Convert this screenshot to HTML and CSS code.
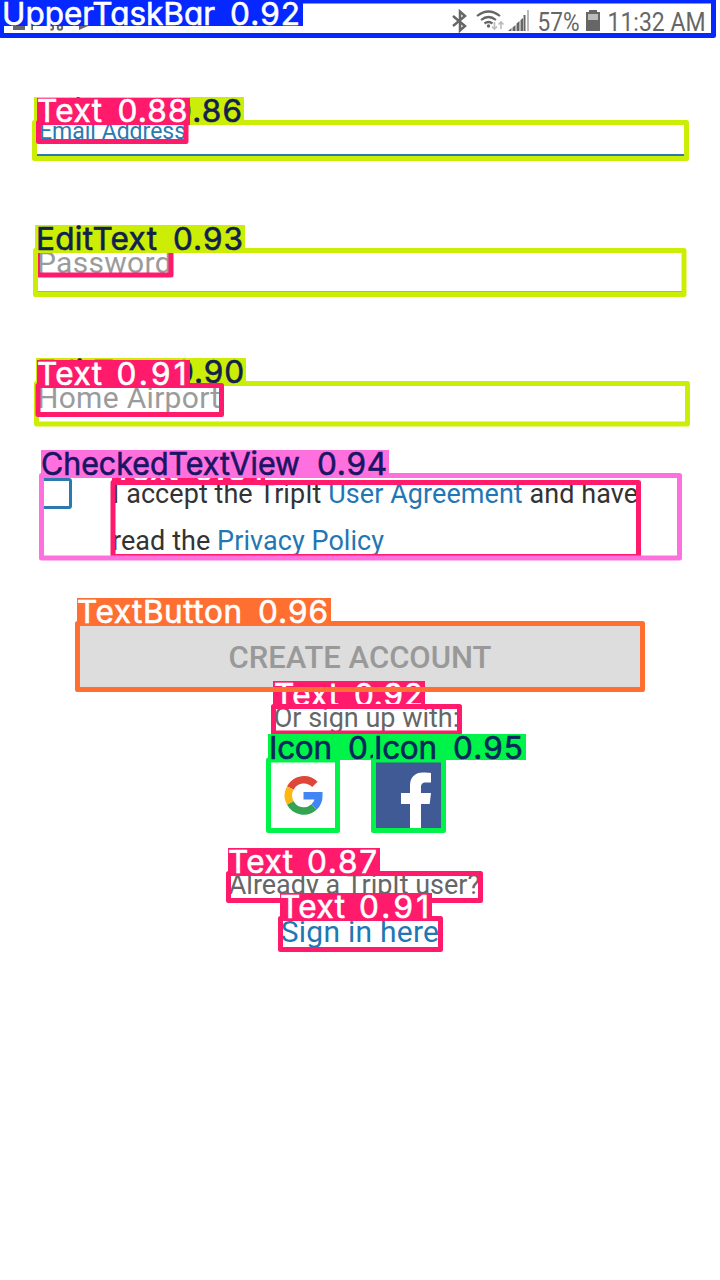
FILE: index.html
```html
<!DOCTYPE html>
<html lang="en">
<head>
<meta charset="utf-8">
<title>Create account</title>
<link rel="stylesheet" href="styles.css">
</head>
<body>
<div class="screen">
  <header class="status">
    <svg class="status-left" width="100" height="38" viewBox="0 0 100 38" fill="#666">
      <path d="M13 25h12v5H13zM29 25h4v5h-4zM79 26h9l-9 4z"/>
      <g fill="none" stroke="#666" stroke-width="2"><circle cx="51" cy="27.500" r="2.200"/><circle cx="60" cy="27.500" r="2.200"/></g>
    </svg>
    <svg class="status-right" width="270" height="38" viewBox="450 0 270 38">
      <path d="M453 16l12 10-5 4.500V11.500l5 4.500-12 10" fill="none" stroke="#666" stroke-width="2.500"/>
      <g fill="none" stroke="#666" stroke-width="2.200"><path d="M477 16q11.500-9 23 0M481 20q7.500-6 15 0M484.500 23.500q4-3 8 0"/></g>
      <circle cx="488.500" cy="26" r="1.700" fill="#666"/>
      <path d="M494.500 22v7m-2.500-2.500l2.500 2.500 2.500-2.500M501 29v-7m-2.500 2.500L501 22l2.500 2.500" fill="none" stroke="#bbb" stroke-width="1.600"/>
      <path d="M508 31l3.500-3v3zM512.500 27.500l3-2.500v6h-3zM516.500 23.500l3-2.500v10h-3zM520.500 20l2.500-2v13h-2.500z" fill="#666"/>
      <path d="M524.500 15v16" stroke="#666" stroke-width="2"/>
      <path d="M528 10v21" stroke="#bbb" stroke-width="2"/>
      <text class="status-text" x="537.500" y="31" textLength="42" lengthAdjust="spacingAndGlyphs">57%</text>
      <path d="M589 10h8v2h3v19h-14V12h3z" fill="#666"/><path d="M588 14h10v6h-10z" fill="#bbb"/>
      <text class="status-text" x="607.500" y="31" textLength="98" lengthAdjust="spacingAndGlyphs">11:32 AM</text>
    </svg>
  </header>
  <main class="form">
    <div class="field email"><span>Email Address</span></div>
    <div class="field password"><span>Password</span></div>
    <div class="field airport"><span>Home Airport</span></div>
    <div class="terms">
      <span class="check"></span>
      <p><span class="line first">I accept the TripIt <a>User Agreement</a> and have</span><br><span class="line">read the <a>Privacy Policy</a></span></p>
    </div>
    <button class="create"><span>CREATE ACCOUNT</span></button>
    <div class="or">Or sign up with:</div>
    <div class="social">
      <svg width="66" height="66" viewBox="0 0 66 66" fill="none" stroke-width="7.500">
        <path d="M43.900 22.400A15.300 15.300 0 0 0 19.300 26" stroke="#df4538"/>
        <path d="M19.300 26a15.300 15.300 0 0 0 0 15" stroke="#fbb811"/>
        <path d="M19.300 41a15.300 15.300 0 0 0 23.700 4" stroke="#35a352"/>
        <path d="M43 45a15.300 15.300 0 0 0 4.800-11.300H32.500" stroke="#4285f4"/>
      </svg>
      <svg width="66" height="66" viewBox="0 0 66 66">
        <path fill="#405a95" d="M0 0h66v66H0z"/>
        <path fill="#fff" d="M34 66V42h-9V31h9v-7c0-9 5-13.500 13-13.500 3.500 0 6 .2 8 .6v9.500h-5c-4 0-5 2-5 5V31h10l-1.300 11H45v24z"/>
      </svg>
    </div>
    <div class="already">Already a TripIt user?</div>
    <a class="signin">Sign in here</a>
  </main>

  <svg class="marks" width="720" height="1280" viewBox="0 0 720 1280">
    <g class="pink">
      <rect class="tag" x="112" y="457" width="153" height="26"/>
      <text x="113" y="481" textLength="65">Text</text><text x="194" y="481" textLength="69">0.91</text>
      <rect class="box" x="113" y="482.500" width="525.500" height="74"/>
      <rect class="box" x="37.500" y="250" width="133.500" height="25"/>
      <rect class="tag" x="273" y="681" width="152" height="26"/>
      <text x="274" y="706" textLength="65">Text</text><text x="354" y="706" textLength="69">0.92</text>
      <rect class="box" x="273.500" y="706.500" width="186" height="26.500"/>
    </g>
    <g class="blue">
      <rect class="box" x="1.500" y="1" width="712" height="34.500"/>
      <rect class="tag" x="0" y="0" width="303" height="26"/>
      <text x="2" y="25" textLength="213" lengthAdjust="spacingAndGlyphs">UpperTaskBar</text><text x="230" y="25" textLength="70">0.92</text>
    </g>
    <g class="lime">
      <rect class="box" x="34.500" y="122.500" width="652" height="36"/>
      <rect class="tag" x="34" y="97" width="210" height="26"/>
      <text x="35.500" y="121.500" textLength="121">EditText</text><text x="172" y="121.500" textLength="70">0.86</text>
      <rect class="box" x="35.500" y="250.500" width="648.500" height="44"/>
      <rect class="tag" x="35" y="225" width="210" height="26"/>
      <text x="36" y="250" textLength="121">EditText</text><text x="173" y="250" textLength="70">0.93</text>
      <rect class="box" x="36.500" y="383.500" width="651" height="40.500"/>
      <rect class="tag" x="36" y="358" width="210" height="26"/>
      <text x="37" y="382.500" textLength="121">EditText</text><text x="174" y="382.500" textLength="70">0.90</text>
    </g>
    <g class="pink">
      <rect class="box" x="38.500" y="122.500" width="147.500" height="19"/>
      <rect class="tag" x="37" y="98" width="153" height="27"/>
      <text x="37" y="122" textLength="65">Text</text><text x="117.500" y="122" textLength="70">0.88</text>
      <rect class="box" x="38" y="385.500" width="183.500" height="29"/>
      <rect class="tag" x="37" y="360" width="153" height="26"/>
      <text x="37" y="385" textLength="65">Text</text><text x="116.500" y="385" textLength="70">0.91</text>
    </g>
    <g class="violet">
      <rect class="box" x="41.500" y="475.500" width="638" height="82.500"/>
      <rect class="tag" x="41" y="450" width="348" height="26"/>
      <text x="41" y="475" textLength="259" lengthAdjust="spacingAndGlyphs">CheckedTextView</text><text x="317" y="475" textLength="70">0.94</text>
    </g>
    <g class="orange">
      <rect class="box" x="77.500" y="623.500" width="565" height="66"/>
      <rect class="tag" x="77" y="598" width="254" height="26"/>
      <text x="77" y="623" textLength="165">TextButton</text><text x="258" y="623" textLength="70">0.96</text>
    </g>
    <g class="green">
      <rect class="box" x="268.500" y="760" width="69" height="70.500"/>
      <rect class="tag" x="268" y="734" width="153" height="26"/>
      <text x="269" y="758.500" textLength="63">Icon</text><text x="348" y="758.500" textLength="70">0.95</text>
      <rect class="box" x="373.500" y="760" width="70" height="70.500"/>
      <rect class="tag" x="373" y="734" width="153" height="26"/>
      <text x="374" y="758.500" textLength="63">Icon</text><text x="453" y="758.500" textLength="70">0.95</text>
    </g>
    <g class="pink">
      <rect class="box" x="228.500" y="873.500" width="252" height="27"/>
      <rect class="tag" x="228" y="848" width="152" height="26"/>
      <text x="228" y="873" textLength="65">Text</text><text x="307" y="873" textLength="70">0.87</text>
      <rect class="box" x="280.500" y="918.500" width="160" height="31"/>
      <rect class="tag" x="280" y="893" width="152" height="26"/>
      <text x="280" y="918" textLength="65">Text</text><text x="359" y="918" textLength="70">0.91</text>
    </g>
  </svg>
</div>
</body>
</html>
```
FILE: styles.css
```css
body { margin: 0; background: #fff; font-family: Roboto, "Liberation Sans", sans-serif; }
.screen { position: relative; width: 720px; height: 1280px; overflow: hidden; }
.status { display: flex; justify-content: space-between; height: 38px; }
.status-text { font-size: 26px; fill: #666; }
.form { display: flex; flex-direction: column; align-items: center; }
.field { box-sizing: border-box; width: 648px; padding-left: 1px; color: #9b9b9b; font-size: 30px; line-height: 36px; border-bottom: 1px solid #aaa; white-space: nowrap; letter-spacing: .3px; }
.email { margin-top: 78px; height: 40px; padding-left: 3px; font-size: 23px; line-height: 32px; letter-spacing: 0; color: #2a7ab0; border-bottom: 2px solid #2a7ab0; }
.password { margin-top: 89px; height: 47px; }
.airport { margin-top: 88px; height: 44px; }
.terms { display: flex; width: 640px; height: 94px; margin-top: 47px; color: #333; font-size: 27px; line-height: 47px; letter-spacing: .06px; white-space: nowrap; }
.terms p { margin: 0 0 0 40px; }
.check { box-sizing: border-box; width: 32px; height: 31px; margin-top: 7px; border: 3px solid #2a7ab0; border-radius: 3px; flex: none; }
.terms a, .signin { color: #1f77b4; }
.create { width: 562px; height: 66px; margin-top: 60px; border: 0; padding: 0 0 2px; background: #ddd; color: #999; font: 500 31px Roboto, sans-serif; }
.or, .already { color: #666; font-size: 27px; line-height: 32px; }
.or { margin: 11px 0 0 13px; }
.social { display: flex; gap: 39px; margin: 28px 0 0 -8px; }
.already { margin: 41px 0 0 -11px; }
.signin { margin-top: 13px; font-size: 30px; line-height: 36px; letter-spacing: .25px; }

.marks { position: absolute; left: 0; top: 0; font: 400 31.5px Inter, sans-serif; font-feature-settings: "cv11"; }
.marks .box { fill: none; stroke: var(--mark); stroke-width: 5px; stroke-linejoin: round; }
.marks .tag { fill: var(--mark); }
.marks text { fill: var(--ink); stroke: var(--ink); stroke-width: .6px; }
.blue { --mark: #0428ff; --ink: #fff; }
.lime { --mark: #cbed06; --ink: #10204f; }
.pink { --mark: #ff1a6b; --ink: #fff; }
.violet { --mark: #ff70df; --ink: #1a1464; }
.orange { --mark: #ff6f32; --ink: #fff; }
.green { --mark: #00f348; --ink: #06285a; }
```
